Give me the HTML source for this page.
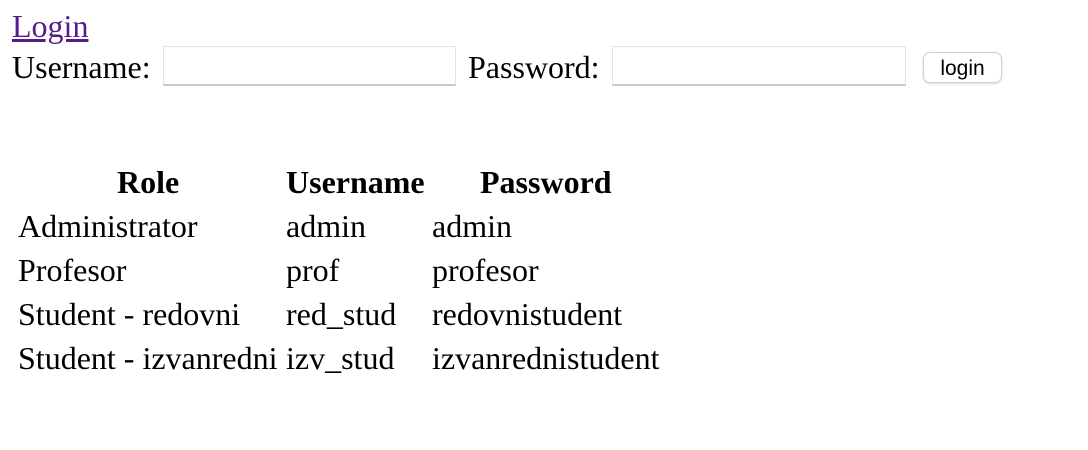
<!DOCTYPE html>
<html><head><style>
body{margin:0;width:1088px;height:450px;background:#fff;font-family:"Liberation Serif",serif;font-size:32px;color:#000;position:relative;overflow:hidden}
.a{position:absolute;white-space:nowrap;line-height:36px}
a{color:#551a8b;text-decoration:underline}
.in{position:absolute;border:1px solid #e3e3e3;border-bottom:2px solid #c8c8c8;background:#fff;box-sizing:border-box}
.btn{position:absolute;left:923px;top:52px;width:79px;height:31px;border:1px solid #d0d0d0;border-radius:7px;background:#fff;box-shadow:0 1px 2px rgba(0,0,0,.15);font-family:"Liberation Sans",sans-serif;font-size:21px;text-align:center;line-height:31px;box-sizing:border-box}
b{font-weight:bold}
</style></head><body>
<div class="a" style="left:12px;top:8px"><a>Login</a></div>
<div class="a" style="left:12px;top:49px">Username:</div>
<div class="in" style="left:163px;top:46px;width:293px;height:40px"></div>
<div class="a" style="left:468px;top:49px">Password:</div>
<div class="in" style="left:612px;top:46px;width:294px;height:40px"></div>
<div class="btn">login</div>
<div class="a" style="left:117px;top:164px"><b>Role</b></div>
<div class="a" style="left:286px;top:164px"><b>Username</b></div>
<div class="a" style="left:480px;top:164px"><b>Password</b></div>
<div class="a" style="left:18px;top:208px">Administrator</div>
<div class="a" style="left:286px;top:208px">admin</div>
<div class="a" style="left:432px;top:208px">admin</div>
<div class="a" style="left:18px;top:252px">Profesor</div>
<div class="a" style="left:286px;top:252px">prof</div>
<div class="a" style="left:432px;top:252px">profesor</div>
<div class="a" style="left:18px;top:296px">Student - redovni</div>
<div class="a" style="left:286px;top:296px">red_stud</div>
<div class="a" style="left:432px;top:296px">redovnistudent</div>
<div class="a" style="left:18px;top:340px">Student - izvanredni</div>
<div class="a" style="left:286px;top:340px">izv_stud</div>
<div class="a" style="left:432px;top:340px">izvanrednistudent</div>
</body></html>
